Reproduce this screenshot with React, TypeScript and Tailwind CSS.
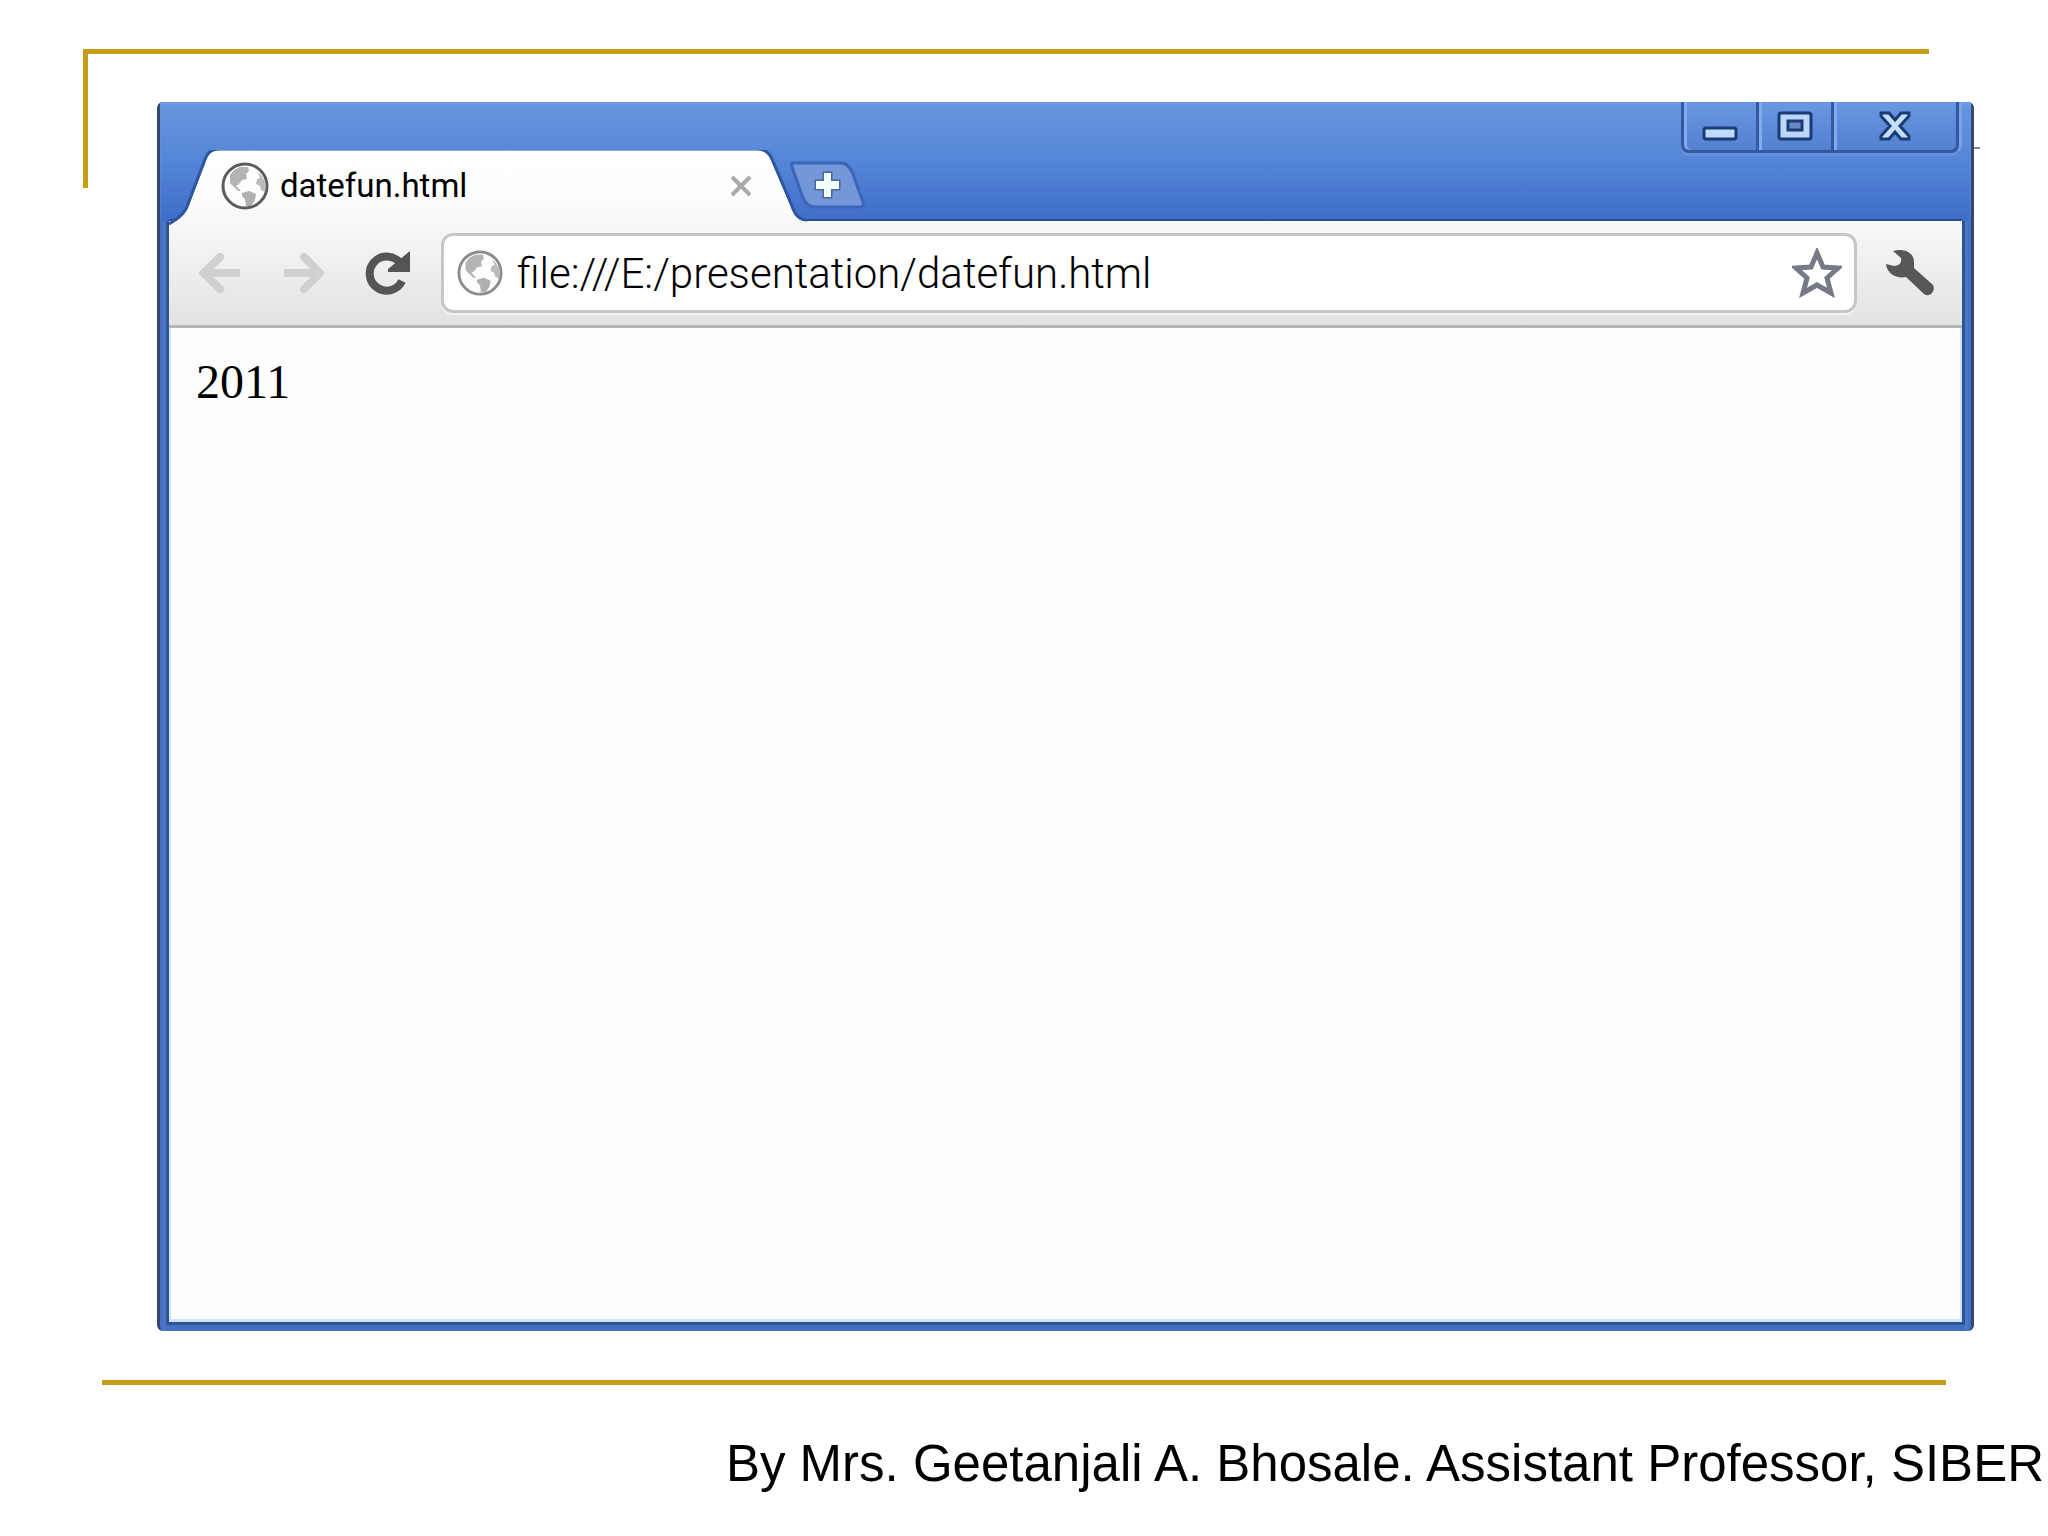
import { useState } from "react";

function Globe({ className, ring }: { className: string; ring: string }) {
  return (
    <svg viewBox="0 0 48 48" className={className} aria-hidden="true">
      <circle cx="24" cy="24" r="22" fill="#fdfdfd" stroke={ring} strokeWidth="3" />
      <path
        d="M9 13 L13 8 L19 5 L27 5 L28 9 L25 12 L26 17 L21 18 L18 22 L15 24 L20 29 L17 29 L9 21 Z"
        fill="#b4b4b4"
      />
      <path d="M21 31 L28 29 L35 32 L34 38 L30 44 L25 44 L24 37 L21 34 Z" fill="#b0b0b0" />
      <path d="M37 10 L41 14 L45 22 L44 30 L40 28 L39 24 L35 22 L36 17 L39 16 Z" fill="#bcbcbc" />
    </svg>
  );
}

function TabShape() {
  return (
    <svg
      viewBox="0 0 638 76"
      preserveAspectRatio="none"
      className="absolute left-0 top-0 h-[76px] w-full"
      aria-hidden="true"
    >
      <defs>
        <linearGradient id="tabFill" x1="0" y1="0" x2="0" y2="1">
          <stop offset="0" stopColor="#ffffff" />
          <stop offset="0.5" stopColor="#fefefe" />
          <stop offset="1" stopColor="#f7f7f8" />
        </linearGradient>
      </defs>
      <path
        d="M0 76 C8 70 17 65 20 55 L36 13 C39 4 42 0 50 0 H587 C596 0 599 3 602 10 L622 57 C625 65 629 71 638 71 V76 Z"
        fill="url(#tabFill)"
      />
      <path
        d="M0 74 C8 69 16 64 19 54 L35 12 C38 3 42 -1 50 -1 H587 C597 -1 600 3 603 9 L623 56 C626 65 630 70 638 70"
        fill="none"
        stroke="#2c569f"
        strokeWidth="3"
      />
    </svg>
  );
}

function TitleBar() {
  return (
    <div className="flex h-[119px] justify-between bg-linear-to-b from-[#6696df] via-[#5585d7] to-[#3f6dc7] pl-[9px] shadow-[inset_0_3px_2px_#6c9ce6]">
      <div className="flex items-end" role="tablist">
        <div className="relative flex h-[71px] w-[638px] items-center pl-[52px] pr-[55px]" role="tab" aria-selected="true">
          <TabShape />
          <Globe className="relative size-[48px]" ring="#5c5c5c" />
          <span className="relative ml-[11px] flex-1 font-[Roboto,sans-serif] text-[33px] leading-[40px] text-black">
            datefun.html
          </span>
          <button aria-label="Close tab" className="relative">
            <svg viewBox="0 0 22 22" className="size-[22px]" aria-hidden="true">
              <path d="M2 2 L20 20 M20 2 L2 20" stroke="#aaaaaa" strokeWidth="4" />
            </svg>
          </button>
        </div>
        <button aria-label="New tab" className="-ml-[18px] mb-3">
          <svg viewBox="0 0 78 48" className="h-[48px] w-[78px]" aria-hidden="true">
            <path
              d="M3 2 H52 C58 2 61 6 64 13 L74 41 C75 44 74 46 71 46 H27 C20 46 17 43 14 37 L3 6 Z"
              fill="#7497da"
              stroke="#3b66b7"
              strokeWidth="3"
            />
            <path
              d="M35 12 H42 V20 H50 V28 H42 V36 H35 V28 H27 V20 H35 Z"
              fill="#f4ffff"
              stroke="#4c6796"
              strokeWidth="3"
              paintOrder="stroke"
            />
          </svg>
        </button>
      </div>
      <div className="mr-[12px] flex h-[51px] shrink-0 rounded-b-lg border-x-[3px] border-b-[3px] border-[#315aa2] bg-linear-to-b from-[#6998e2] to-[#5480d0] shadow-[0_3px_0_#6590dc,3px_0_0_#7ba4e8,inset_3px_0_0_#82abeb]">
        <button aria-label="Minimize" className="flex w-[75px] items-start justify-center border-r-[3px] border-[#315aa2]">
          <svg viewBox="0 0 36 51" className="h-[51px] w-[36px]" aria-hidden="true">
            <rect x="2" y="26" width="32" height="11" rx="2" fill="#c0dbfb" stroke="#193c76" strokeWidth="3" />
          </svg>
        </button>
        <button
          aria-label="Maximize"
          className="flex w-[75px] items-start justify-center border-r-[3px] border-[#315aa2] shadow-[inset_3px_0_0_#82abeb]"
        >
          <svg viewBox="0 0 36 51" className="h-[51px] w-[36px]" aria-hidden="true">
            <rect x="2" y="11" width="32" height="26" rx="2" fill="#bcd6f9" stroke="#193c76" strokeWidth="3" />
            <rect x="11" y="19" width="14" height="9" fill="#6a88be" stroke="#193c76" strokeWidth="3" />
          </svg>
        </button>
        <button
          aria-label="Close"
          className="flex w-[122px] items-start justify-center shadow-[inset_3px_0_0_#82abeb]"
        >
          <svg viewBox="0 0 34 51" className="h-[51px] w-[34px]" aria-hidden="true">
            <path
              d="M3 11 H11 L17 18 L23 11 H31 V14 L22 24 L31 34 V37 H23 L17 30 L11 37 H3 V34 L12 24 L3 14 Z"
              fill="#c5defc"
              stroke="#193c76"
              strokeWidth="3"
            />
          </svg>
        </button>
      </div>
    </div>
  );
}

function Toolbar() {
  const [url, setUrl] = useState("file:///E:/presentation/datefun.html");
  return (
    <div className="flex h-[107px] items-center border-b-[3px] border-[#b5b3b6] bg-linear-to-b from-[#f8f8f9] to-[#e3e1e4] pl-[30px] pr-[27px] shadow-[0_-2px_0_#2c4f96]">
      <button aria-label="Back">
        <svg viewBox="0 0 42 40" className="h-[40px] w-[42px]" aria-hidden="true">
          <path d="M41 20 H7 M21 4 L5 20 L21 36" fill="none" stroke="#d0cfd1" strokeWidth="8" />
          <path d="M21 4 L5 20 L21 36" fill="none" stroke="#d0cfd1" strokeWidth="8" strokeLinecap="round" strokeLinejoin="round" />
        </svg>
      </button>
      <button aria-label="Forward" className="ml-[42px]">
        <svg viewBox="0 0 42 40" className="h-[40px] w-[42px]" aria-hidden="true">
          <path d="M1 20 H35" fill="none" stroke="#d0cfd1" strokeWidth="8" />
          <path d="M21 4 L37 20 L21 36" fill="none" stroke="#d0cfd1" strokeWidth="8" strokeLinecap="round" strokeLinejoin="round" />
        </svg>
      </button>
      <button aria-label="Reload" className="ml-[40px]">
        <svg viewBox="0 0 46 44" className="h-[44px] w-[46px]" aria-hidden="true">
          <path d="M35 12 A17 17 0 1 0 37 30" fill="none" stroke="#555456" strokeWidth="8" />
          <path d="M45 0 V21 H23 V18 Z" fill="#555456" />
        </svg>
      </button>
      <div className="ml-[30px] flex h-[80px] min-w-0 flex-1 items-center rounded-xl border-[3px] border-[#c6c5c8] bg-white pl-[13px] pr-[12px] shadow-[0_2px_0_#f4f3f5]">
        <Globe className="size-[46px] shrink-0" ring="#8c8c8c" />
        <input
          aria-label="Address"
          value={url}
          onChange={(event) => setUrl(event.target.value)}
          className="ml-[14px] min-w-0 flex-1 bg-transparent pt-[2px] font-[Roboto,sans-serif] text-[42px] leading-[60px] font-light text-black outline-none"
        />
        <button aria-label="Bookmark this page">
          <svg viewBox="0 0 50 50" className="size-[50px]" aria-hidden="true">
            <path
              d="M25 5 L31 19 L46 20 L35 30 L39 45 L25 37 L11 45 L15 30 L4 20 L19 19 Z"
              fill="#ffffff"
              stroke="#757a85"
              strokeWidth="5"
            />
          </svg>
        </button>
      </div>
      <button aria-label="Settings" className="ml-[28px]">
        <svg viewBox="0 0 50 48" className="h-[48px] w-[50px]" aria-hidden="true">
          <path
            d="M8 2 C18 -1 29 3 29 13 V19 L48 36 C51 42 45 49 39 45 L21 28 C12 30 2 25 1 15 L9 17 C14 17 17 14 16 9 Z"
            fill="#575757"
          />
        </svg>
      </button>
    </div>
  );
}

export default function App() {
  return (
    <div className="relative flex min-h-screen w-full flex-col overflow-hidden bg-white pt-[102px]">
      <div className="absolute left-[83px] right-[119px] top-[49px] h-[139px] border-l-[5px] border-t-[5px] border-[#c79d18]" />
      <div className="absolute right-[68px] top-[147px] h-[2px] w-[12px] bg-[#85858b]" />

      <main className="relative ml-[157px] mr-[74px] flex flex-1 flex-col rounded-md border-x-[3px] border-[#34486f] bg-[#4471c5]">
        <TitleBar />
        <div className="mx-[3px] flex flex-1 flex-col bg-[#2c5596] px-[6px] pb-[9px] shadow-[inset_3px_0_0_#4a76c4,inset_-3px_0_0_#4a76c4,inset_0_-6px_0_#4370c4]">
          <Toolbar />
          <section className="flex-1 border-x-[2px] border-b-[3px] border-[#d3e3f7] bg-[#fefefe] px-[25px] pt-[24px]">
            <p className="font-['Liberation_Serif',serif] text-[48px] leading-[60px] text-black">2011</p>
          </section>
        </div>
      </main>

      <footer className="mt-[49px] flex flex-col">
        <div className="ml-[102px] mr-[102px] h-[5px] bg-[#c79d18]" />
        <p className="mt-[47px] mb-[41px] mr-1 self-end whitespace-nowrap font-['Liberation_Sans',sans-serif] text-[51px] leading-[63px] text-black">
          By Mrs. Geetanjali A. Bhosale. Assistant Professor, SIBER
        </p>
      </footer>
    </div>
  );
}
